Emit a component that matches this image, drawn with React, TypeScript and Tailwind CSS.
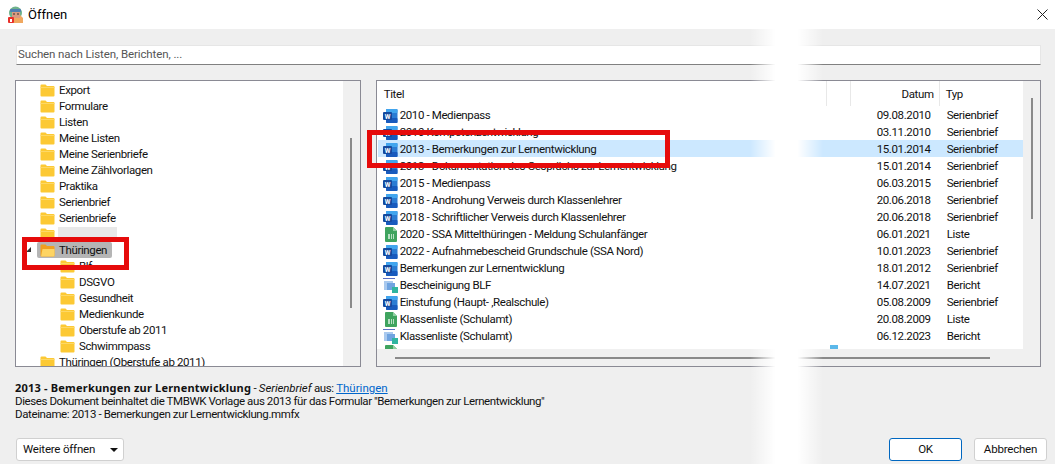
const treeTop = ["Export", "Formulare", "Listen", "Meine Listen", "Meine Serienbriefe", "Meine Zählvorlagen", "Praktika", "Serienbrief", "Serienbriefe"]
const treeSub = ["Blf", "DSGVO", "Gesundheit", "Medienkunde", "Oberstufe ab 2011", "Schwimmpass"]

type Kind = "word" | "sheet" | "report"

const files: { icon: Kind; title: string; date: string; typ: string }[] = [
  { icon: "word", title: "2010 - Medienpass", date: "09.08.2010", typ: "Serienbrief" },
  { icon: "word", title: "2010 Kompetenzentwicklung", date: "03.11.2010", typ: "Serienbrief" },
  { icon: "word", title: "2013 - Bemerkungen zur Lernentwicklung", date: "15.01.2014", typ: "Serienbrief" },
  { icon: "word", title: "2013 - Dokumentation des Gesprächs zur Lernentwicklung", date: "15.01.2014", typ: "Serienbrief" },
  { icon: "word", title: "2015 - Medienpass", date: "06.03.2015", typ: "Serienbrief" },
  { icon: "word", title: "2018 - Androhung Verweis durch Klassenlehrer", date: "20.06.2018", typ: "Serienbrief" },
  { icon: "word", title: "2018 - Schriftlicher Verweis durch Klassenlehrer", date: "20.06.2018", typ: "Serienbrief" },
  { icon: "sheet", title: "2020 - SSA Mittelthüringen - Meldung Schulanfänger", date: "06.01.2021", typ: "Liste" },
  { icon: "word", title: "2022 - Aufnahmebescheid Grundschule (SSA Nord)", date: "10.01.2023", typ: "Serienbrief" },
  { icon: "word", title: "Bemerkungen zur Lernentwicklung", date: "18.01.2012", typ: "Serienbrief" },
  { icon: "report", title: "Bescheinigung BLF", date: "14.07.2021", typ: "Bericht" },
  { icon: "word", title: "Einstufung (Haupt- ,Realschule)", date: "05.08.2009", typ: "Serienbrief" },
  { icon: "sheet", title: "Klassenliste (Schulamt)", date: "20.08.2009", typ: "Liste" },
  { icon: "report", title: "Klassenliste (Schulamt)", date: "06.12.2023", typ: "Bericht" },
]

function Folder({ open }: { open?: boolean }) {
  return (
    <svg width="15" height="14" viewBox="0 0 15 14" className="shrink-0">
      <path d="M0.5 2.5 Q0.5 1.5 1.5 1.5 H5.5 L7 3 H13.5 Q14.5 3 14.5 4 V12.5 Q14.5 13.5 13.5 13.5 H1.5 Q0.5 13.5 0.5 12.5 Z" fill={open ? "#f0a020" : "#fcc934"} />
      {open ? (
        <path d="M2.5 6 H14.5 V12.5 Q14.5 13.5 13.5 13.5 H1 Z" fill="#fdd463" />
      ) : (
        <rect x="0.5" y="4" width="14" height="1" fill="#fdd866" />
      )}
    </svg>
  )
}

function FileIcon({ kind }: { kind: Kind }) {
  if (kind === "sheet") {
    return (
      <svg width="15" height="15" viewBox="0 0 15 15" className="shrink-0">
        <path d="M2 1 Q2 0 3 0 H10 L14 4 V14 Q14 15 13 15 H3 Q2 15 2 14 Z" fill="#3fa45f" />
        <path d="M10 0 L14 4 H10 Z" fill="#8fd0a2" />
        <rect x="5" y="7" width="6" height="5" fill="#b8e0c4" />
        <rect x="7" y="7" width="1" height="5" fill="#3fa45f" />
        <rect x="9" y="7" width="1" height="5" fill="#3fa45f" />
      </svg>
    )
  }
  if (kind === "report") {
    return (
      <svg width="15" height="15" viewBox="0 0 15 15" className="shrink-0">
        <rect x="0" y="0" width="12" height="1" fill="#5b6fc4" />
        <rect x="1" y="3" width="9" height="9" fill="#a9c9ee" />
        <rect x="4" y="5" width="8" height="7" fill="#6fa3e0" />
        <rect x="9" y="9" width="6" height="6" fill="#2fb5a0" />
      </svg>
    )
  }
  return (
    <svg width="15" height="14" viewBox="0 0 15 14" className="shrink-0">
      <rect x="3" y="0" width="11.5" height="14" rx="1" fill="#2b7cd3" />
      <rect x="3" y="0" width="11.5" height="4" rx="1" fill="#41a5ee" />
      <rect x="3" y="9" width="11.5" height="5" rx="1" fill="#185abd" />
      <rect x="0" y="3" width="9" height="8" rx="1" fill="#144a9e" />
      <text x="4.5" y="9.5" textAnchor="middle" fontSize="6.5" fontWeight="700" fill="#ffffff">W</text>
    </svg>
  )
}

function TreeRow({ label, indent }: { label: string; indent?: boolean }) {
  return (
    <div className={`flex h-4 shrink-0 items-center gap-[4px] ${indent ? "pl-[44px]" : "pl-[24px]"}`}>
      <Folder />
      <span className="pt-[1px]">{label}</span>
    </div>
  )
}

function AppIcon() {
  return (
    <svg width="17" height="17" viewBox="0 0 17 17" className="shrink-0">
      <circle cx="8.5" cy="7" r="6.5" fill="#6fb28c" />
      <path d="M5 17 V9 H13 L16 12 V17 Z" fill="#f0a860" />
      <rect x="3" y="3" width="11" height="3" rx="1" fill="#4f7fb0" />
      <rect x="5" y="6" width="8" height="6" fill="#d99a80" />
      <rect x="6" y="7.5" width="2" height="1" fill="#333333" />
      <rect x="10" y="7.5" width="2" height="1" fill="#333333" />
      <rect x="1" y="11" width="6" height="6" rx="1" fill="#e8302a" />
      <rect x="3" y="13" width="2" height="3" fill="#ffffff" />
    </svg>
  )
}

export default function App() {
  return (
    <div className="relative flex h-[464px] w-[1055px] flex-col overflow-hidden bg-[#efefef] font-['Roboto',sans-serif] text-[11.5px] tracking-[-0.38px] text-[#111]">
      <div className="flex h-[29px] shrink-0 items-center justify-between bg-white pl-[7px] pr-[7px] tracking-normal">
        <div className="flex items-center gap-[4px]">
          <AppIcon />
          <span className="text-[13px] text-black">Öffnen</span>
        </div>
        <svg width="11" height="11" viewBox="0 0 11 11">
          <path d="M0.5 0.5 L10.5 10.5 M10.5 0.5 L0.5 10.5" stroke="#222" strokeWidth="1" />
        </svg>
      </div>

      <div className="flex flex-1 flex-col px-[14px] pt-[16px]">
        <div className="ml-[2px] flex h-[20px] w-[1025px] shrink-0 items-center border border-[#e6e6e6] border-b-[#808080] bg-white pl-[1px] tracking-[-0.1px] text-[#555]">
          Suchen nach Listen, Berichten, ...
        </div>

        <div className="mt-[15px] flex h-[287px] shrink-0 gap-[15px] pl-[1px]">
          <div className="flex w-[346px] overflow-hidden border border-[#8a8a94] bg-white">
            <div className="flex h-full flex-1 flex-col overflow-hidden pt-[1px]">
              {treeTop.map((t) => (
                <TreeRow key={t} label={t} />
              ))}
              <div className="flex h-4 shrink-0 items-center gap-[3px] pl-[24px]">
                <Folder />
                <div className="h-[15px] w-[59px] bg-[#e8e8e8]" />
              </div>
              <div className="relative flex h-4 shrink-0 items-center pl-[21px]">
                <span className="absolute left-[10px] top-[5px] h-0 w-0 border-b-[5px] border-l-[5px] border-b-[#333] border-l-transparent" />
                <div className="flex h-4 w-[75px] items-center gap-[4px] rounded-[2px] bg-[#b5b5b5] pl-[3px]">
                  <Folder open />
                  <span className="pt-[1px]">Thüringen</span>
                </div>
              </div>
              {treeSub.map((t) => (
                <TreeRow key={t} label={t} indent />
              ))}
              <TreeRow label="Thüringen (Oberstufe ab 2011)" />
            </div>
            <div className="flex w-[17px] shrink-0 justify-center bg-[#f0f0f0] pt-[57px]">
              <div className="h-[170px] w-[2px] bg-[#8a8a8a]" />
            </div>
          </div>

          <div className="flex w-[666px] flex-col overflow-hidden border border-[#8a8a94] bg-white">
            <div className="flex min-h-0 flex-1">
              <div className="flex min-w-0 flex-1 flex-col pl-[1px]">
                <div className="flex h-[25px] shrink-0 items-center">
                  <div className="flex h-full w-[448px] items-center pl-[6px] pt-[2px]">Titel</div>
                  <div className="h-full w-[24px] border-l border-[#e8e8e8]" />
                  <div className="flex h-full w-[89px] items-center justify-end border-l border-[#e8e8e8] pr-[5px] pt-[2px]">Datum</div>
                  <div className="flex h-full flex-1 items-center border-l border-[#e8e8e8] pl-[6px] pt-[2px]">Typ</div>
                </div>
                {files.map((f, i) => (
                  <div key={i} className={`flex h-[17px] shrink-0 items-center pt-[2px] ${i === 2 ? "bg-[#cce8ff]" : ""}`}>
                    <div className="flex w-[472px] items-center gap-[2px] pl-[5px]">
                      <FileIcon kind={f.icon} />
                      <span>{f.title}</span>
                    </div>
                    <div className="w-[81px] text-right">{f.date}</div>
                    <div className="pl-[16px]">{f.typ}</div>
                  </div>
                ))}
                <div className="flex h-[5px] shrink-0 items-start overflow-hidden pl-[5px] pt-[1px]">
                  <FileIcon kind="sheet" />
                  <div className="ml-[432px] h-[4px] w-[8px] bg-[#5bb8ea]" />
                </div>
              </div>
              <div className="flex w-[17px] shrink-0 justify-center bg-[#f0f0f0] pt-[17px]">
                <div className="h-[121px] w-[2px] bg-[#8a8a8a]" />
              </div>
            </div>
            <div className="flex h-[17px] shrink-0 items-center bg-[#f0f0f0] pl-[18px]">
              <div className="h-[2px] w-[595px] bg-[#8a8a8a]" />
            </div>
          </div>
        </div>

        <div className="mt-[14px] flex flex-col pl-[1px] leading-[13px]">
          <p className="whitespace-nowrap">
            <b className="font-['Noto_Sans',sans-serif] text-[11px] tracking-[0.2px]">2013 - Bemerkungen zur Lernentwicklung</b> - <i className="tracking-[-0.1px]">Serienbrief</i> aus: <span className="tracking-normal text-[#0066cc] underline">Thüringen</span>
          </p>
          <p className="whitespace-nowrap tracking-[-0.41px]">Dieses Dokument beinhaltet die TMBWK Vorlage aus 2013 für das Formular "Bemerkungen zur Lernentwicklung"</p>
          <p className="whitespace-nowrap">Dateiname: 2013 - Bemerkungen zur Lernentwicklung.mmfx</p>
        </div>

        <div className="mt-[17px] flex items-center justify-between pl-[2px]">
          <button className="flex h-[23px] w-[108px] items-center justify-between rounded-[3px] border border-[#d0d0d0] bg-white pl-[6px] pr-[5px] tracking-[-0.2px]">
            Weitere öffnen
            <span className="h-0 w-0 border-x-[4px] border-t-[4px] border-x-transparent border-t-[#111]" />
          </button>
          <div className="mr-[-6px] flex gap-[12px] tracking-[-0.2px]">
            <button className="h-[23px] w-[73px] rounded-[3px] border border-[#0067c0] bg-white">OK</button>
            <button className="h-[23px] w-[73px] rounded-[3px] border border-[#d0d0d0] bg-white">Abbrechen</button>
          </div>
        </div>
      </div>

      {/* Abdeckung und Markierungen liegen ueber dem Dialog */}
      <div className="pointer-events-none absolute bottom-0 left-[750px] top-[29px] w-[73px] bg-[linear-gradient(90deg,transparent,white_35%,white_65%,transparent)]" />
      <div className="pointer-events-none absolute left-[22px] top-[237px] h-[33px] w-[107px] border-[5px] border-[#e60b0b]" />
      <div className="pointer-events-none absolute left-[367px] top-[130px] h-[38px] w-[303px] border-[5px] border-[#e60b0b]" />
    </div>
  )
}
